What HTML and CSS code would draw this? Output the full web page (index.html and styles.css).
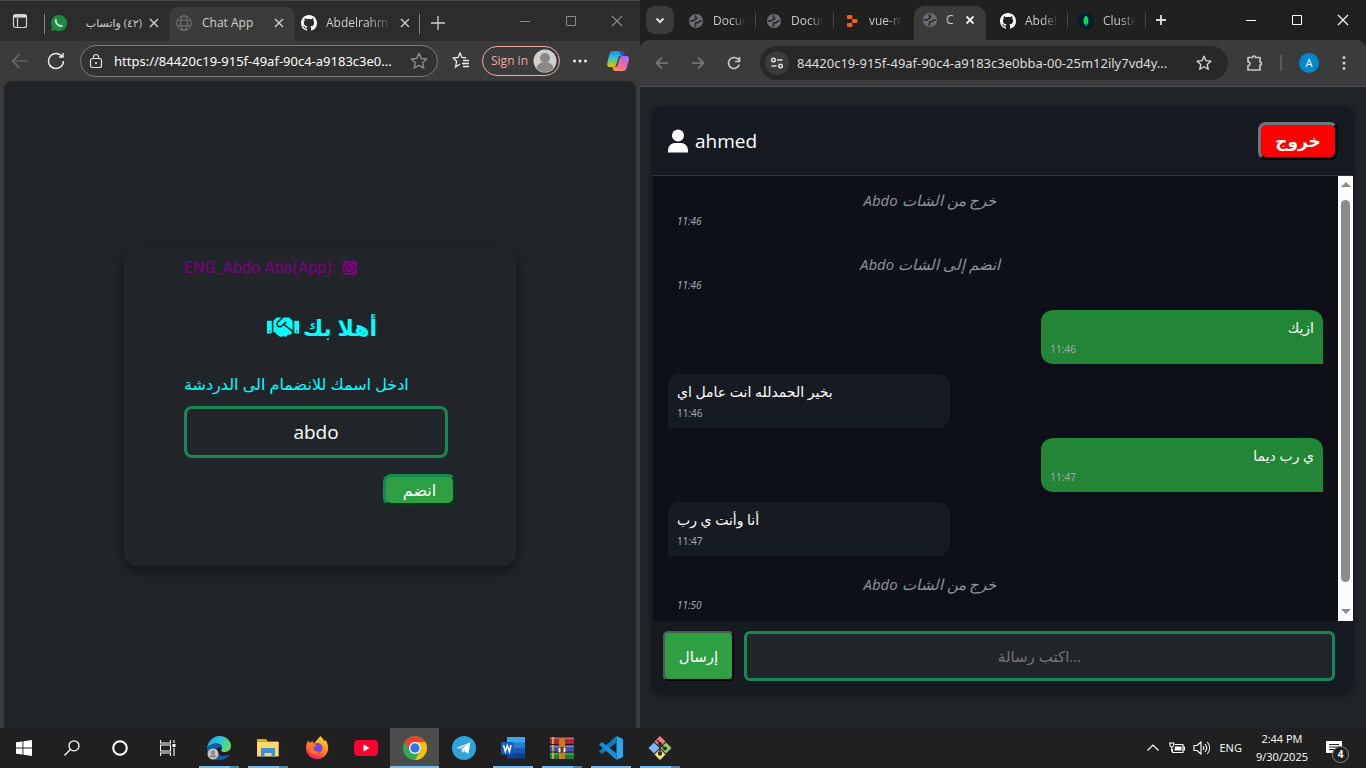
FILE: index.html
```html
<!DOCTYPE html>
<html lang="en">
<head>
<meta charset="utf-8">
<meta name="viewport" content="width=device-width, initial-scale=1">
<title>Chat App</title>
<link rel="stylesheet" href="styles.css">
</head>
<body>
<svg class="defs" aria-hidden="true">
  <symbol id="i-github" viewBox="0 0 16 16"><path fill="currentColor" d="M8 0C3.58 0 0 3.58 0 8c0 3.54 2.29 6.53 5.47 7.59.4.07.55-.17.55-.38v-1.49c-2.01.37-2.53-.49-2.69-.94-.09-.23-.48-.94-.82-1.13-.28-.15-.68-.52-.01-.53.63-.01 1.08.58 1.23.82.72 1.21 1.87.87 2.33.66.07-.52.28-.87.51-1.07-1.78-.2-3.64-.89-3.64-3.95 0-.87.31-1.59.82-2.15-.08-.2-.36-1.02.08-2.12 0 0 .67-.21 2.2.82a7.6 7.6 0 0 1 4 0c1.53-1.04 2.2-.82 2.2-.82.44 1.1.16 1.92.08 2.12.51.56.82 1.27.82 2.15 0 3.07-1.87 3.75-3.65 3.95.29.25.54.73.54 1.48v2.2c0 .21.15.46.55.38A8 8 0 0 0 16 8c0-4.42-3.58-8-8-8"/></symbol>
  <symbol id="i-x" viewBox="0 0 16 16"><path d="M4 4l8 8M12 4l-8 8" fill="none" stroke="currentColor" stroke-width="1.4"/></symbol>
  <symbol id="i-plus" viewBox="0 0 16 16"><path d="M8 1v14M1 8h14" fill="none" stroke="currentColor" stroke-width="1.3"/></symbol>
  <symbol id="i-earth" viewBox="0 0 16 16"><circle cx="8" cy="8" r="7" fill="#6b6f75"/><path d="M8.500 2.500C7 3 6.800 4 8 4.500s.8 1.800-.6 1.800C6 6.300 6.500 7.600 5 7.800H2M6.500 13.500c1-.3 1.300-1.200 1-2-.6-1.500.6-2 1.800-1.700 1.400.3 1.400-1 2.200-1.500.8-.5 1.400-.3 2.500-.3" fill="none" stroke="#292b2d" stroke-width="1.700"/></symbol>
  <symbol id="i-win-min" viewBox="0 0 12 12"><path d="M1 6.500h10" stroke="currentColor"/></symbol>
  <symbol id="i-win-max" viewBox="0 0 12 12"><path d="M1.500 1.500h9v9h-9z" fill="none" stroke="currentColor"/></symbol>
  <symbol id="i-win-close" viewBox="0 0 12 12"><path d="M1 1l10 10M11 1L1 11" fill="none" stroke="currentColor" stroke-width="1.100"/></symbol>
  <symbol id="i-star" viewBox="0 0 16 16"><path d="M8 1.200l2 4.500 4.900.5-3.700 3.300 1.100 4.800L8 11.800l-4.300 2.500 1.100-4.800L1.100 6.200 6 5.700z" fill="none" stroke="currentColor" stroke-width="1.300" stroke-linejoin="round"/></symbol>
  <symbol id="i-wa" viewBox="0 0 16 16"><path fill="currentColor" d="M8 0a8 8 0 0 0-6.900 12L0 16l4.100-1.100A8 8 0 1 0 8 0"/><path d="M5.500 4.300c-1.500 1-.8 3.200.8 4.800s3.700 2.700 4.900 1.300" fill="none" stroke="#d9dedb" stroke-width="1.800"/></symbol>
</svg>

<main class="desktop">
  <section class="edge" aria-label="Edge window">
    <header class="edge-strip">
      <button class="icon-btn tab-actions" aria-label="Tab actions"><svg class="s16" viewBox="0 0 16 16" fill="none" stroke="#d4d4d4" stroke-width="1.200"><rect x="1.500" y="1.500" width="13" height="13" rx="2"/><path d="M2 3.300h12" stroke-width="2.600"/><path d="M5.500 5v9"/></svg></button>
      <div class="etab etab-first"><svg class="s16 wa"><use href="#i-wa"/></svg><span class="etab-name ar-tab" dir="rtl">(٤٢) واتساب</span><button class="icon-btn" aria-label="Close tab"><svg class="s16"><use href="#i-x"/></svg></button></div>
      <div class="etab etab-active"><svg class="s16" viewBox="0 0 16 16" fill="none" stroke="#777"><circle cx="8" cy="8" r="7.300"/><ellipse cx="8" cy="8" rx="3.300" ry="7.300"/><path d="M1.300 5.300h13.400M1.300 10.700h13.400"/></svg><span class="etab-name">Chat App</span><button class="icon-btn" aria-label="Close tab"><svg class="s16"><use href="#i-x"/></svg></button></div>
      <div class="etab etab-last"><svg class="s16 white"><use href="#i-github"/></svg><span class="etab-name fade">Abdelrahma</span><button class="icon-btn" aria-label="Close tab"><svg class="s16"><use href="#i-x"/></svg></button></div>
      <button class="icon-btn edge-new" aria-label="New tab"><svg class="s16"><use href="#i-plus"/></svg></button>
      <div class="win-ctl win-dim"><button class="icon-btn" aria-label="Minimize"><svg class="s12"><use href="#i-win-min"/></svg></button><button class="icon-btn" aria-label="Maximize"><svg class="s12"><use href="#i-win-max"/></svg></button><button class="icon-btn" aria-label="Close"><svg class="s12"><use href="#i-win-close"/></svg></button></div>
    </header>
    <div class="edge-bar">
      <button class="icon-btn" aria-label="Back"><svg class="s20" viewBox="0 0 20 20" fill="none" stroke="#737373" stroke-width="1.200"><path d="M18 10H2.500M9.500 3l-7 7 7 7"/></svg></button>
      <button class="icon-btn" aria-label="Reload"><svg class="s20" viewBox="0 0 20 20" fill="none" stroke="#f0f0f0" stroke-width="1.400"><path d="M17.500 10a7.500 7.500 0 1 1-2.600-5.700l1.600 1.600M17 2v4h-4"/></svg></button>
      <div class="edge-omni">
        <svg class="s16" viewBox="0 0 16 16" fill="none" stroke="#e0e0e0" stroke-width="1.200"><rect x="2.500" y="5.500" width="11" height="9" rx="2"/><path d="M5.500 5.500V4a2.500 2.500 0 0 1 5 0v1.500"/><circle cx="8" cy="10" r=".5" fill="#e0e0e0"/></svg>
        <input class="url" type="text" aria-label="Address" value="https://84420c19-915f-49af-90c4-a9183c3e0...">
        <button class="icon-btn dim" aria-label="Favorite"><svg class="s18"><use href="#i-star"/></svg></button>
      </div>
      <button class="icon-btn fav" aria-label="Favorites"><svg class="s18" viewBox="0 0 18 18" fill="none" stroke="#eee" stroke-width="1.300"><path d="M8 12l-4.500 3 1.200-5.500L1.300 6l4.800-.6L8 1l2 4.400 4 .4M11 8.500h6M10 11.500h7M11 14.500h6"/></svg></button>
      <button class="signin">Sign in<svg class="s24" viewBox="0 0 24 24"><circle cx="12" cy="12" r="11.500" fill="#d2d0ce"/><circle cx="12" cy="9" r="5" fill="#8a8886"/><path d="M3.500 19a8.500 6 0 0 1 17 0 11 11 0 0 1-17 0" fill="#8a8886"/></svg></button>
      <button class="icon-btn" aria-label="Settings"><svg class="s16" viewBox="0 0 16 16" fill="#eee"><circle cx="2.500" cy="8" r="1.500"/><circle cx="8" cy="8" r="1.500"/><circle cx="13.500" cy="8" r="1.500"/></svg></button>
      <button class="icon-btn copilot" aria-label="Copilot"><svg class="s24" viewBox="0 0 24 24"><defs><linearGradient id="cp1" x1="0" y1="0" x2="0" y2="1"><stop offset="0" stop-color="#1b8cf0"/><stop offset=".45" stop-color="#35c4c9"/><stop offset=".75" stop-color="#8ccb3f"/><stop offset="1" stop-color="#f7ba16"/></linearGradient><linearGradient id="cp2" x1=".8" y1="0" x2="0" y2="1"><stop offset="0" stop-color="#a96bf0"/><stop offset=".5" stop-color="#ee6aa0"/><stop offset="1" stop-color="#ff9a45"/></linearGradient></defs><path d="M7 2h8c2 0 2.500 1 3 3l.5 2h-4c-1.500 0-2 1-2.500 3l-1.500 5c-.6 2-1.300 3-3 3H4c-3 0-3-2-2.500-5l2-8C4 3 5 2 7 2z" fill="url(#cp1)"/><path d="M17 22H9.500c-2 0-2.500-1-3-4h3c1.500 0 2-1 2.500-3l1.500-5c.6-2 1.300-3 3-3H20c3 0 3.500 2 2.700 5l-2 7c-.6 2-1.700 3-3.700 3z" fill="url(#cp2)"/><path d="M13 2h2c2 0 2.500 1 3 3l.5 2h-3z" fill="#1b57c8"/></svg></button>
    </div>
    <div class="edge-page">
      <form class="join">
        <p class="credit">ENG_Abdo Atia(App): <svg class="s16" viewBox="0 0 16 16"><rect x="1" y="1" width="14" height="14" rx="2" fill="purple"/><path d="M3.300 12.800l.7-2.300a4.800 4.800 0 1 1 1.800 1.700z" fill="none" stroke="#212529"/><path d="M6.300 5.500c-.7 1.300 1.700 4.300 3.700 4" fill="none" stroke="#212529" stroke-width="1.300"/></svg></p>
        <h2 class="welcome"><svg class="hands" viewBox="0 32 640 440" fill="currentColor"><path d="M434.700 64h-85.900c-8 0-15.700 3-21.600 8.400l-98.300 90c-.1.100-.2.300-.3.400-16.600 15.600-16.300 40.500-2.100 56 12.700 13.900 39.400 17.600 56.100 2.700.1-.1.300-.1.400-.2l79.900-73.200c6.500-5.900 16.700-5.500 22.600 1 6 6.500 5.500 16.600-1 22.600l-26.100 23.900L504 313.800c2.900 2.400 5.500 5 7.900 7.700V128l-54.600-54.600c-5.900-6-14.100-9.400-22.600-9.400zM544 128.200v223.900c0 17.700 14.300 32 32 32h64V128.200h-96zm48 223.900c-8.800 0-16-7.200-16-16s7.200-16 16-16 16 7.200 16 16-7.200 16-16 16zM0 384h64c17.700 0 32-14.300 32-32V128.200H0V384zm48-63.900c8.800 0 16 7.200 16 16s-7.200 16-16 16-16-7.200-16-16c0-8.900 7.200-16 16-16zm435.900 18.600L334.600 217.500l-30 27.500c-29.700 27.100-75.200 24.500-101.700-4.400-26.900-29.400-24.800-74.900 4.400-101.700L289.100 64h-83.800c-8.500 0-16.600 3.400-22.600 9.400L128 128v223.900h18.300l90.500 81.900c27.400 22.300 67.700 18.100 90-9.300l.2-.2 17.900 15.500c15.900 13 39.400 10.500 52.300-5.400l31.400-38.600 5.400 4.400c13.700 11.100 33.900 9.100 45-4.700l9.500-11.700c11.200-13.800 9.100-33.900-4.600-45.100z"/></svg><span dir="rtl">أهلا بك</span></h2>
        <label class="join-label" for="name">ادخل اسمك للانضمام الى الدردشة</label>
        <input class="join-name" id="name" type="text" value="abdo">
        <button class="join-btn" type="button">انضم</button>
      </form>
    </div>
  </section>

  <section class="chrome" aria-label="Chrome window">
    <header class="chrome-strip">
      <button class="icon-btn tab-search" aria-label="Search tabs"><svg class="s16" viewBox="0 0 16 16" fill="none" stroke="#ddd" stroke-width="2"><path d="M4.500 6.500L8 10l3.500-3.500"/></svg></button>
      <div class="ctab"><svg class="s16"><use href="#i-earth"/></svg><span class="ctab-name">Docum</span></div>
      <div class="ctab"><svg class="s16"><use href="#i-earth"/></svg><span class="ctab-name">Docum</span></div>
      <div class="ctab ctab-nosep"><svg class="s16" viewBox="0 0 16 16" fill="#f26207"><rect x="3" y="2" width="5.500" height="4" rx="1"/><rect x="8" y="6" width="5.500" height="4" rx="1"/><rect x="3" y="10" width="5.500" height="4" rx="1"/></svg><span class="ctab-name">vue-m</span></div>
      <div class="ctab ctab-active"><svg class="s16"><use href="#i-earth"/></svg><span>C</span><button class="icon-btn ctab-close" aria-label="Close tab"><svg class="s16" viewBox="0 0 16 16" fill="none" stroke="#eee" stroke-width="1.800"><path d="M4.500 4.500l7 7M11.500 4.500l-7 7"/></svg></button></div>
      <div class="ctab"><svg class="s16 white"><use href="#i-github"/></svg><span class="ctab-name">Abdel</span></div>
      <div class="ctab"><svg class="s16" viewBox="0 0 16 16"><circle cx="8" cy="8" r="8" fill="#001e2b"/><path d="M8 2.500c3.200 3.500 3.200 7.500 0 10.300-3.200-2.800-3.200-6.800 0-10.300z" fill="#00ed64"/><path d="M7.700 6h.7v7.500h-.7z" fill="#0b7a45"/></svg><span class="ctab-name">Cluste</span></div>
      <button class="icon-btn chrome-new" aria-label="New tab"><svg class="s16" viewBox="0 0 16 16" fill="none" stroke="#ddd" stroke-width="1.800"><path d="M8 3v10M3 8h10"/></svg></button>
      <div class="win-ctl"><button class="icon-btn" aria-label="Minimize"><svg class="s12"><use href="#i-win-min"/></svg></button><button class="icon-btn" aria-label="Maximize"><svg class="s12"><use href="#i-win-max"/></svg></button><button class="icon-btn" aria-label="Close"><svg class="s12"><use href="#i-win-close"/></svg></button></div>
    </header>
    <div class="chrome-bar">
      <button class="icon-btn" aria-label="Back"><svg class="s16" viewBox="0 0 16 16" fill="none" stroke="#7d7d7d" stroke-width="1.700"><path d="M14 8H3M8 2.500L2.500 8 8 13.500"/></svg></button>
      <button class="icon-btn" aria-label="Forward"><svg class="s16" viewBox="0 0 16 16" fill="none" stroke="#7d7d7d" stroke-width="1.700"><path d="M2 8h11M8 2.500L13.500 8 8 13.500"/></svg></button>
      <button class="icon-btn" aria-label="Reload"><svg class="s16" viewBox="0 0 16 16" fill="none" stroke="#c7c7c7" stroke-width="1.700"><path d="M13.300 9.500A5.500 5.500 0 1 1 12 4.200l1.500 1.600M13.500 2v4.500H9"/></svg></button>
      <div class="chrome-omni">
        <button class="icon-btn site-info" aria-label="Site information"><svg class="s16" viewBox="0 0 16 16" fill="none" stroke="#dedede" stroke-width="1.500"><circle cx="4.500" cy="5" r="1.800"/><path d="M8 5h5.500M2.500 11h5"/><circle cx="11.500" cy="11" r="1.800"/></svg></button>
        <input class="url" type="text" aria-label="Address" value="84420c19-915f-49af-90c4-a9183c3e0bba-00-25m12ily7vd4y...">
        <button class="icon-btn" aria-label="Bookmark"><svg class="s16"><use href="#i-star"/></svg></button>
      </div>
      <div class="chrome-side">
        <button class="icon-btn" aria-label="Extensions"><svg class="s18" viewBox="0 0 18 18" fill="none" stroke="#c7c7c7" stroke-width="1.700" stroke-linejoin="round"><path d="M3 3.500h4.500C7.500 1.500 10.500 1.500 10.500 3.500H15V8c2 0 2 3 0 3v5H3v-4.300c2.500 0 2.500-4 0-4z"/></svg></button>
        <span class="bar-sep"></span>
        <button class="avatar" aria-label="Profile">A</button>
        <button class="icon-btn" aria-label="Menu"><svg class="s16" viewBox="0 0 16 16" fill="#c7c7c7"><circle cx="8" cy="2.500" r="1.600"/><circle cx="8" cy="8" r="1.600"/><circle cx="8" cy="13.500" r="1.600"/></svg></button>
      </div>
    </div>
    <div class="chrome-page">
      <div class="chat">
        <header class="chat-head">
          <div class="user"><svg class="user-icon" viewBox="0 0 20 24" fill="#fff"><circle cx="10" cy="6.500" r="6"/><path d="M0 23.500v-2.500a7 7 0 0 1 7-7h6a7 7 0 0 1 7 7v2.500z"/></svg><span>ahmed</span></div>
          <button class="logout">خروج</button>
        </header>
        <div class="chat-body">
          <ol class="messages">
            <li class="msg msg-sys"><p>Abdo خرج من الشات</p><time>11:46</time></li>
            <li class="msg msg-sys"><p>Abdo انضم إلى الشات</p><time>11:46</time></li>
            <li class="msg msg-mine"><p>ازيك</p><time>11:46</time></li>
            <li class="msg msg-their"><p>بخير الحمدلله انت عامل اي</p><time>11:46</time></li>
            <li class="msg msg-mine"><p>ي رب ديما</p><time>11:47</time></li>
            <li class="msg msg-their"><p>أنا وأنت ي رب</p><time>11:47</time></li>
            <li class="msg msg-sys"><p>Abdo خرج من الشات</p><time>11:50</time></li>
          </ol>
          <div class="scroll" aria-hidden="true"><span class="arrow-up"></span><span class="thumb"></span><span class="arrow-down"></span></div>
        </div>
        <form class="compose">
          <button class="send" type="button">إرسال</button>
          <input class="compose-text" type="text" aria-label="اكتب رسالة" placeholder="اكتب رسالة...">
        </form>
      </div>
    </div>
  </section>
</main>

<footer class="taskbar">
  <button class="tb sys" aria-label="Start"><svg class="s16" viewBox="0 0 16 16" fill="#fff"><path d="M0 2.300L6.500 1.400v6.200H0zM7.400 1.200L16 0v7.600H7.400zM0 8.400h6.500v6.200L0 13.700zM7.400 8.400H16V16l-8.600-1.200z"/></svg></button>
  <button class="tb sys" aria-label="Search"><svg class="s16" viewBox="0 0 16 16" fill="none" stroke="#fff" stroke-width="1.300"><circle cx="10" cy="5.800" r="5"/><path d="M6.300 9.500L.5 15.500"/></svg></button>
  <button class="tb sys" aria-label="Cortana"><svg class="s16" viewBox="0 0 16 16" fill="none" stroke="#fff" stroke-width="2"><circle cx="8" cy="8" r="6.800"/></svg></button>
  <button class="tb sys" aria-label="Task view"><svg class="s16" viewBox="0 0 16 16" fill="none" stroke="#fff" stroke-width="1.100"><path d="M.5 0v3h10V0M.5 16v-3h10v3M.5 5h10v6H.5zM14 0v3M14 8v8"/><path d="M12.500 4h3v3h-3z" fill="#fff" stroke="none"/></svg></button>
  <button class="tb open multi" aria-label="Edge"><svg class="s24" viewBox="0 0 24 24"><defs><linearGradient id="eg" x1="0" y1=".3" x2="1" y2=".6"><stop offset="0" stop-color="#1ba5e0"/><stop offset=".5" stop-color="#2fc4dc"/><stop offset="1" stop-color="#6be05a"/></linearGradient></defs><path d="M0 12C1 5 6 0 12.500 0 19 0 24 4.500 24 10c0 3.500-2.800 6-6.500 6-2.500 0-3.500-1-3.300-1.800C16.500 11 14 7.500 9.500 7.500 5 7.500 1.500 10 0 12z" fill="url(#eg)"/><path d="M0 12c1.500-2.500 5-4.500 9-4.500 3 0 5.500 2 5.500 4.500-4-2-6 1-4.500 4.500C12 21 18 20.500 23 18.500 20.500 22 17 24 12 24 5 24 0 18.500 0 12z" fill="#0f5dab"/><circle cx="6" cy="18" r="5.500" fill="#c9c9c9"/><circle cx="6" cy="16.500" r="2.300" fill="#8c8c8c"/><path d="M2.300 21.500a3.700 2.700 0 0 1 7.400 0z" fill="#8c8c8c"/></svg></button>
  <button class="tb open multi" aria-label="File Explorer"><svg class="s24" viewBox="0 0 24 24"><path d="M1 3h9l2 2.500h10.500V20H1z" fill="#e8a317"/><path d="M1 6h21.500v14.500H1z" fill="#ffd86b"/><path d="M5 12h14v9h-3.500v-4h-7v4H5z" fill="#3f8fd2"/></svg></button>
  <button class="tb" aria-label="Firefox"><svg class="s24" viewBox="0 0 24 24"><defs><linearGradient id="ff" x1=".8" y1="0" x2=".3" y2="1"><stop offset="0" stop-color="#ffe226"/><stop offset=".5" stop-color="#ff8a1a"/><stop offset="1" stop-color="#f5156c"/></linearGradient></defs><path d="M15.500 0c2 2 3 3.500 3.500 5l1.500-1c3 4.500 3.500 9 1.500 13-2 4-5.500 6-10 6C5.500 23 1 18.500 1 12c0-3 .5-5 2.500-7.500L4.500 7l3-2 .8 3z" fill="url(#ff)"/><circle cx="12.500" cy="12" r="5" fill="#7542e5"/><path d="M3.500 7.500c3-1 6 0 8.500 2.500-1.500 0-3 .7-3.500 2-.5 3 3.500 4.500 6 3-1.500 3-6.500 4-9.500 1-2-2-2.500-5-1.500-8.500z" fill="#ff7a21"/></svg></button>
  <button class="tb" aria-label="YouTube"><svg class="s24" viewBox="0 0 24 24"><rect y="4" width="24" height="16" rx="4" fill="#ff0033"/><path d="M9.500 8.500v7l6-3.500z" fill="#fff"/></svg></button>
  <button class="tb open current" aria-label="Chrome"><svg class="s24" viewBox="0 0 24 24"><circle cx="12" cy="12" r="12" fill="#34a853"/><path d="M12 0a12 12 0 0 1 10.400 6H12a6 6 0 0 0-5.500 8.200L1.600 6A12 12 0 0 1 12 0z" fill="#ea4335"/><path d="M22.400 6A12 12 0 0 1 12 24l5.200-9A6 6 0 0 0 12 6z" fill="#fbbc05"/><circle cx="12" cy="12" r="6" fill="#fff"/><circle cx="12" cy="12" r="4.700" fill="#3376e8"/></svg></button>
  <button class="tb" aria-label="Telegram"><svg class="s24" viewBox="0 0 24 24"><circle cx="12" cy="12" r="12" fill="#2ea3dd"/><path d="M4.500 12L18.500 6.300 16.200 18l-4-3-2 2-.7-3.800 6-5.200-7.500 4.600z" fill="#fff"/></svg></button>
  <button class="tb open" aria-label="Word"><svg class="s24" viewBox="0 0 24 24"><path d="M6 1h18v6H6z" fill="#41a5ee"/><path d="M6 6.500h18V12H6z" fill="#2b7cd3"/><path d="M6 12h18v5.500H6z" fill="#185abd"/><path d="M6 17h18v5.500H6z" fill="#103f91"/><rect y="6" width="12.500" height="12.500" rx="1" fill="#185abd"/><path d="M2.500 9l1.800 6.500L6.300 9.500l2 6L10 9" fill="none" stroke="#fff" stroke-width="1.500"/></svg></button>
  <button class="tb open multi" aria-label="WinRAR"><svg class="s24" viewBox="0 0 24 24"><rect y="1" width="24" height="7" rx="1" fill="#b3203f"/><rect y="9" width="24" height="6.500" fill="#4c4da0"/><rect y="16.500" width="24" height="6.500" rx="1" fill="#1c7d35"/><path d="M0 2.500h24M0 10.500h24M0 18h24" stroke="#fff" stroke-opacity=".35"/><path d="M3 1v7M3 9v6.500M3 16.500V23" stroke="#f2c12e" stroke-width="1.500"/><path d="M9 2h6v21H9z" fill="#d07a1f"/><path d="M8.500 12h7v4h-7z" fill="#eee"/><path d="M10.500 11h3v6h-3z" fill="#6a3b12"/></svg></button>
  <button class="tb open" aria-label="Visual Studio Code"><svg class="s24" viewBox="0 0 24 24"><path d="M17.500 0L24 3v18l-6.500 3z" fill="#29a8f2"/><path d="M17.500 0v6.500L3 18 0 15.500z" fill="#0c7bc0"/><path d="M17.500 24v-6.500L3 6 0 8.500z" fill="#1490dc"/></svg></button>
  <button class="tb open multi" aria-label="Git"><svg class="s24" viewBox="0 0 24 24"><path d="M12 0l5.500 5.500L12 11 6.500 5.500z" fill="#f47c7c"/><path d="M6 6.500l5.500 5.500L6 17.500.5 12z" fill="#80b3ff"/><path d="M18 6.500l5.500 5.500-5.500 5.500-5.500-5.500z" fill="#8fce6a"/><path d="M12 13l5.500 5.500L12 24l-5.500-5.500z" fill="#ffe680"/><path d="M9 4l3 3v11M12 8l5 5" stroke="#332c2c" stroke-width="1.500" fill="none"/><circle cx="12" cy="8" r="2" fill="#332c2c"/><circle cx="12" cy="17.500" r="2.200" fill="#332c2c"/><circle cx="17" cy="12.500" r="2" fill="#332c2c"/></svg></button>
  <div class="tray">
    <button class="icon-btn" aria-label="Show hidden icons"><svg class="s16" viewBox="0 0 16 16" fill="none" stroke="#fff" stroke-width="1.200"><path d="M2.500 10.500L8 5l5.500 5.500"/></svg></button>
    <button class="icon-btn" aria-label="Battery"><svg class="s16" viewBox="0 0 16 16" fill="none" stroke="#fff" stroke-width="1.100"><path d="M5.500 4.500H14v8H3.500V9M14.500 7h1v3h-1"/><path d="M6 6.500h6.500v4H5.500z" fill="#fff" stroke="none"/><path d="M1 2.500v3c0 2 3.500 2 3.500 0v-3M0 3h5.500M2.700 7v4.500"/></svg></button>
    <button class="icon-btn" aria-label="Volume"><svg class="s18" viewBox="0 0 18 18" fill="none" stroke="#fff" stroke-width="1.100"><path d="M1 6.500h3L8 3v12l-4-3.500H1zM10 7c1 1.200 1 2.800 0 4M12 5c2 2.400 2 5.600 0 8M14.300 3c3 3.600 3 8.400 0 12"/></svg></button>
    <button class="tray-lang">ENG</button>
    <button class="tray-clock"><span>2:44 PM</span><span>9/30/2025</span></button>
    <button class="icon-btn notify" aria-label="Notifications"><svg class="s18" viewBox="0 0 18 18"><path d="M1 2h16v12h-6l-3 3v-3H1z" fill="#fff"/><path d="M4 5.500h10M4 8h10M4 10.500h6" stroke="#202020"/></svg><span class="badge">4</span></button>
  </div>
</footer>
</body>
</html>
```
FILE: styles.css
```css
* { box-sizing: border-box; }
body {
  margin: 0;
  height: 100vh;
  display: flex;
  flex-direction: column;
  overflow: hidden;
  background: #212529;
  color: #fff;
  font: 12px/16px "Open Sans", "DejaVu Sans", sans-serif;
}
button, input { font: inherit; color: inherit; }
button { cursor: pointer; padding: 0; }
input { min-width: 0; outline: 0; }
p, h2, ol { margin: 0; padding: 0; }
svg { display: block; flex: none; }
.defs { position: absolute; width: 0; height: 0; }
.s12 { width: 12px; height: 12px; }
.s16 { width: 16px; height: 16px; }
.s18 { width: 18px; height: 18px; }
.s20 { width: 20px; height: 20px; }
.s24 { width: 24px; height: 24px; }
.white { color: #fff; }
.dim { color: #8a8a8a; }
.icon-btn {
  flex: none;
  display: flex;
  align-items: center;
  justify-content: center;
  border: 0;
  background: none;
}
.url {
  flex: 1;
  border: 0;
  padding: 0;
  background: none;
  font-family: "Noto Sans", sans-serif;
  font-size: 13px;
}
.desktop { flex: 1; display: flex; min-height: 0; }
.win-ctl { display: flex; margin-left: auto; }
.win-ctl .icon-btn { width: 46px; height: 40px; }
.win-dim { color: #8a8a8a; }

/* Edge window */
.edge {
  flex: 640 1 0;
  min-width: 0;
  display: flex;
  flex-direction: column;
  background: #3b3b3b;
}
.edge-strip {
  display: flex;
  align-items: center;
  height: 41px;
  background: #2c2c2c;
  border-top: 1px solid #484848;
  color: #cfcfcf;
}
.tab-actions { width: 43px; padding-right: 4px; height: 40px; }
.etab {
  display: flex;
  align-items: center;
  gap: 10px;
  width: 126px;
  height: 34px;
  margin-top: 6px;
  padding: 0 8px 2px 7px;
}
.etab-first, .etab-last {
  background: linear-gradient(#8a8a8a, #8a8a8a) 1px 7px / 1px 20px no-repeat;
}
.etab-first { gap: 4px; padding-left: 8px; padding-right: 7px; }
.etab-last { gap: 9px; background-position: 124px 7px; padding-left: 6px; }
.etab-active { background-color: #3b3b3b; border-radius: 9px 9px 0 0; }
.etab-name { flex: 1; min-width: 0; white-space: nowrap; }
.ar-tab { font-size: 11px; }
.wa { color: #1f8a3f; }
.fade { mask-image: linear-gradient(90deg, #000 40px, transparent 68px); }
.edge-new { width: 34px; height: 34px; margin-top: 3px; }
.edge-bar {
  display: flex;
  align-items: center;
  height: 40px;
  padding: 0 10px;
  gap: 16px;
}
.edge-omni {
  flex: 1;
  min-width: 0;
  display: flex;
  align-items: center;
  gap: 10px;
  height: 32px;
  margin: 0 -2px;
  padding: 0 9px 0 7px;
  border: 1px solid #777;
  border-radius: 16px;
  background: #323232;
}
.fav { margin-right: -4px; }
.signin {
  display: flex;
  align-items: center;
  justify-content: space-between;
  width: 78px;
  height: 30px;
  margin-right: -4px;
  padding: 0 2px 0 8px;
  border: 1px solid #f2aaa5;
  border-radius: 15px;
  background: none;
  color: #f2aaa5;
}
.copilot { margin-left: 2px; }
.edge-page {
  flex: 1;
  min-height: 0;
  display: flex;
  align-items: center;
  justify-content: center;
  margin: 0 4px;
  padding-top: 4px;
  border-radius: 8px 8px 0 0;
  background: #212529;
}
.join {
  display: flex;
  flex-direction: column;
  width: 392px;
  padding: 8px 60px 60px;
  border-radius: 12px;
  background: #212529;
  box-shadow: 0 4px 12px rgba(0, 0, 0, .5);
}
.credit {
  display: flex;
  align-items: center;
  gap: 6px;
  color: purple;
  font: 16px/24px Roboto, sans-serif;
}
.welcome {
  display: flex;
  align-items: center;
  justify-content: center;
  gap: 4px;
  padding: 28px 0 0 4px;
  color: #0ff;
  font-size: 22px;
  line-height: 38px;
}
.hands { width: 32px; height: 22px; }
.join-label {
  margin-top: 26px;
  color: #0ff;
  font-size: 16px;
  line-height: 24px;
  white-space: nowrap;
}
.join-name {
  width: 264px;
  height: 52px;
  margin-top: 10px;
  border: 3px solid #198754;
  border-radius: 8px;
  background: #212529;
  font-size: 19px;
  text-align: center;
}
.join-btn {
  align-self: flex-end;
  width: 73px;
  height: 32px;
  margin-top: 16px;
  border: 3px solid;
  border-color: #198754 #0b3320 #0b3320 #198754;
  border-radius: 8px;
  background: #2ea043;
  font-size: 16px;
}

/* Chrome window */
.chrome {
  flex: 726 1 0;
  min-width: 0;
  display: flex;
  flex-direction: column;
  background: #1f2020;
}
.chrome-strip { display: flex; align-items: center; height: 40px; padding-left: 6px; color: #c9c9c9; }
.tab-search { width: 28px; height: 28px; margin-right: 6px; border-radius: 9px; background: #3b3b3b; }
.ctab {
  display: flex;
  align-items: center;
  gap: 9px;
  width: 78px;
  height: 34px;
  padding: 2px 3px 0 8px;
  background: linear-gradient(#454545, #454545) 75px 9px / 1px 16px no-repeat;
}
.ctab-nosep { background: none; }
.ctab-name {
  flex: 1;
  white-space: nowrap;
  mask-image: linear-gradient(90deg, #000 18px, transparent 33px);
}
.ctab-active {
  align-self: flex-end;
  width: 72px;
  margin-right: 6px;
  padding: 0 8px 6px;
  gap: 8px;
  border-radius: 10px 10px 0 0;
  background: #3b3b3b;
}
.ctab-close { margin-left: auto; }
.chrome-new { width: 28px; height: 28px; margin-left: -1px; }
.chrome-strip .win-ctl { color: #fff; }
.chrome-bar {
  display: flex;
  align-items: center;
  gap: 20px;
  height: 47px;
  padding: 0 14px;
  background: #3b3b3b;
  border-bottom: 1px solid #4a4a4a;
  border-radius: 9px 9px 0 0;
}
.chrome-omni {
  flex: 1;
  min-width: 0;
  display: flex;
  align-items: center;
  gap: 8px;
  height: 34px;
  margin-left: -2px;
  padding: 0 16px 0 5px;
  border-radius: 17px;
  background: #282828;
  color: #dedede;
}
.site-info { width: 24px; height: 24px; border-radius: 50%; background: #3b3b3b; }
.chrome-side { display: flex; align-items: center; gap: 17px; margin-left: -3px; }
.bar-sep { width: 2px; height: 16px; background: #5a5a5a; }
.avatar { width: 20px; height: 20px; border: 0; border-radius: 50%; background: #0288d1; font-size: 11px; line-height: 20px; }
.chrome-page {
  flex: 1;
  min-height: 0;
  display: flex;
  flex-direction: column;
  padding: 20px 13px 36px;
  background: #212529;
}
.chat {
  flex: 1;
  min-height: 0;
  display: flex;
  flex-direction: column;
  border-radius: 8px;
  background: #161b22;
  box-shadow: 0 2px 10px rgba(0, 0, 0, .5);
}
.chat-head {
  display: flex;
  align-items: center;
  justify-content: space-between;
  height: 69px;
  padding: 0 15px;
  border-bottom: 1px solid #30363d;
}
.user { display: flex; align-items: center; gap: 7px; font-size: 19px; line-height: 28px; }
.user-icon { width: 20px; height: 24px; }
.logout {
  width: 80px;
  height: 38px;
  border: 3px solid;
  border-color: #6c757d #000 #000 #6c757d;
  border-radius: 8px;
  background: #f00;
  font-size: 17px;
  font-weight: 700;
}
.chat-body { flex: 1; min-height: 0; display: flex; background: #0d1117; }
.messages {
  flex: 1;
  display: flex;
  flex-direction: column;
  gap: 10px;
  padding: 6px 15px 0;
  overflow: hidden;
  list-style: none;
}
.msg {
  flex: none;
  display: flex;
  flex-direction: column;
  width: 43%;
  height: 54px;
  padding: 7px 9px 0;
  border-radius: 12px;
  font-size: 14px;
  line-height: 22px;
}
.msg time {
  color: #a3a8ad;
  font-family: "Noto Sans", sans-serif;
  font-size: 10px;
  line-height: 20px;
}
.msg-sys { width: 80%; color: #8b949e; font-size: 15px; font-style: italic; }
.msg-sys p { text-align: center; }
.msg-mine { align-self: flex-end; border-bottom-right-radius: 0; background: #238636; }
.msg-mine p { text-align: right; }
.msg-their { border-bottom-left-radius: 0; background: #161b22; }
.scroll {
  display: flex;
  flex-direction: column;
  align-items: center;
  justify-content: space-between;
  width: 15px;
  padding: 6px 0 7px;
  background: #fcfcfc;
}
.thumb { flex: 1; width: 9px; margin: 13px 0 27px; border-radius: 5px; background: #8b8b8b; }
.arrow-up, .arrow-down { border: 5px solid transparent; }
.arrow-up { border-top: 0; border-bottom-color: #8b8b8b; }
.arrow-down { border-bottom: 0; border-top-color: #8b8b8b; }
.compose { display: flex; gap: 10px; height: 71px; padding: 10px 18px 11px 10px; }
.send {
  width: 71px;
  border: 2px solid;
  border-color: #555 #000 #000 #555;
  border-radius: 5px;
  background: #2ea043;
  font-size: 15px;
}
.compose-text {
  flex: 1;
  border: 3px solid #198754;
  border-radius: 6px;
  background: #212529;
  font-size: 15px;
  text-align: center;
}
.compose-text::placeholder { color: #757575; opacity: 1; }

/* Taskbar */
.taskbar { display: flex; height: 40px; background: #202020; }
.tb {
  display: flex;
  align-items: center;
  justify-content: center;
  width: 49px;
  border: 0;
  background: none;
}
.sys { width: 48px; }
.sys + .tb:not(.sys) { margin-left: 2px; }
.open { background: linear-gradient(#76b9ed, #76b9ed) 50% 100% / 40px 2px no-repeat; }
.multi { background-image: linear-gradient(90deg, #76b9ed 31px, #5484a8 31px); }
.current { background-color: #4c4c4c; background-size: 100% 2px; }
.tray { display: flex; align-items: center; gap: 8px; margin-left: auto; padding-right: 18px; }
.tray-lang, .tray-clock { border: 0; background: none; font-size: 11px; line-height: 18px; }
.tray-clock { display: flex; flex-direction: column; align-items: center; margin: 0 4px 0 6px; }
.notify { position: relative; width: 28px; height: 40px; }
.badge {
  position: absolute;
  left: 12px;
  top: 18px;
  width: 17px;
  height: 17px;
  border: 1px solid #888;
  border-radius: 50%;
  background: #202020;
  font-size: 10px;
  font-weight: 700;
  line-height: 15px;
}
```
